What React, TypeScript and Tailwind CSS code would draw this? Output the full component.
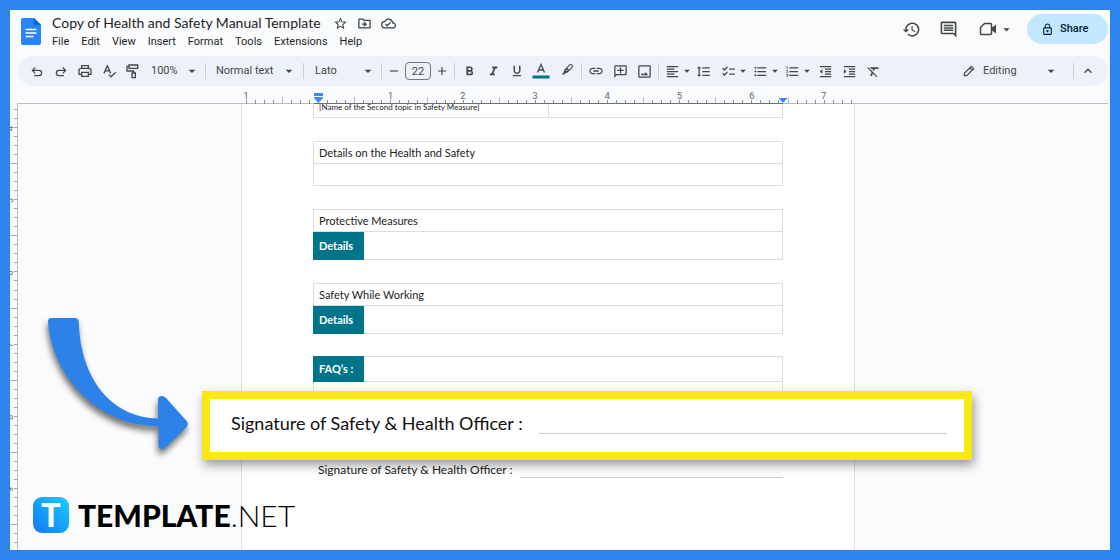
import type { ReactNode } from "react";
import {
  MdArrowDropDown,
  MdChecklist,
  MdFormatAlignLeft,
  MdFormatBold,
  MdFormatClear,
  MdFormatIndentDecrease,
  MdFormatIndentIncrease,
  MdFormatItalic,
  MdFormatLineSpacing,
  MdFormatListBulleted,
  MdFormatListNumbered,
  MdFormatUnderlined,
  MdHistory,
  MdKeyboardArrowUp,
  MdLink,
  MdLockOutline,
  MdOutlineAddComment,
  MdOutlineCloudDone,
  MdOutlineComment,
  MdOutlineDriveFileMove,
  MdStarBorder,
} from "react-icons/md";

const MENUS = ["File", "Edit", "View", "Insert", "Format", "Tools", "Extensions", "Help"];

function IconButton({ label, className = "w-6", children }: { label: string; className?: string; children: ReactNode }) {
  return (
    <button type="button" aria-label={label} className={`flex h-6 shrink-0 items-center justify-center ${className}`}>
      {children}
    </button>
  );
}

function SplitButton({ label, children }: { label: string; children: ReactNode }) {
  return (
    <div className="flex shrink-0 items-center">
      <IconButton label={label} className="w-[22px]">{children}</IconButton>
      <IconButton label={`${label} options`} className="w-2">
        <MdArrowDropDown size={14} className="shrink-0" />
      </IconButton>
    </div>
  );
}

function Picker({ label, value, className }: { label: string; value: string; className: string }) {
  return (
    <div className={`flex shrink-0 items-center ${className}`}>
      <select aria-label={label} className="h-6 w-full appearance-none bg-transparent">
        <option>{value}</option>
      </select>
      <MdArrowDropDown size={16} className="pointer-events-none -ml-4 shrink-0" />
    </div>
  );
}

function Separator({ className = "mx-1" }: { className?: string }) {
  return <span className={`h-4 w-px shrink-0 bg-[#c9ced6] ${className}`} />;
}

function Drawing({ children, size = 16 }: { children: ReactNode; size?: number }) {
  return (
    <svg width={size} height={size} viewBox="0 0 24 24" fill="none" stroke="currentColor" strokeWidth="2" aria-hidden="true">
      {children}
    </svg>
  );
}

function Header() {
  return (
    <header className="flex h-[46px] shrink-0 items-start pl-[11px] pr-[2px]">
      <svg viewBox="0 0 20 27" className="mt-2 h-[27px] w-5 shrink-0" aria-label="Docs">
        <path d="M2 0H13L20 7V25Q20 27 18 27H2Q0 27 0 25V2Q0 0 2 0Z" fill="#2684fc" />
        <path d="M13 0L20 7H13Z" fill="#0066da" />
        <path d="M4.500 11.500H15.500M4.500 15H15.500M4.500 18.500H12.500" stroke="#fff" strokeWidth="1.400" />
      </svg>
      <div className="ml-[11px] flex flex-col">
        <div className="flex h-[26px] items-center text-[#3c4043]">
          <h1 className="text-[14px] leading-5 text-[#1f1f1f]">Copy of Health and Safety Manual Template</h1>
          <div className="ml-2 flex">
            <IconButton label="Star"><MdStarBorder size={15} /></IconButton>
            <IconButton label="Move"><MdOutlineDriveFileMove size={15} /></IconButton>
            <IconButton label="Saved to Drive"><MdOutlineCloudDone size={15} /></IconButton>
          </div>
        </div>
        <nav className="flex gap-3 font-[Roboto,sans-serif] text-[11px] leading-3 text-[#1f1f1f]">
          {MENUS.map((m) => (
            <button type="button" key={m}>{m}</button>
          ))}
        </nav>
      </div>
      <div className="ml-auto flex h-[38px] items-center text-[#444746]">
        <IconButton label="Version history"><MdHistory size={19} /></IconButton>
        <IconButton label="Comments" className="ml-[13px] w-6"><MdOutlineComment size={19} /></IconButton>
        <IconButton label="Join a call" className="ml-4 w-6">
          <svg width="18" height="18" viewBox="0 0 18 18" aria-hidden="true">
            <path d="M5.500 3.500H11.500Q12.500 3.500 12.500 4.500V13.500Q12.500 14.500 11.500 14.500H2.500Q1.500 14.500 1.500 13.500V7.500Z" fill="none" stroke="currentColor" strokeWidth="1.500" strokeLinejoin="round" />
            <path d="M12.500 8L17 4.500V13.500L12.500 10Z" fill="currentColor" />
          </svg>
        </IconButton>
        <IconButton label="Call options" className="w-3"><MdArrowDropDown size={15} className="shrink-0" /></IconButton>
        <button type="button" className="ml-[15px] flex h-[30px] w-[81px] items-center gap-[6px] rounded-full bg-[#c2e7ff] pl-[14px] font-[Roboto,sans-serif] text-[11px] font-medium text-[#001d35]">
          <MdLockOutline size={13} />
          Share
        </button>
      </div>
    </header>
  );
}

function Toolbar() {
  return (
    <div role="toolbar" className="ml-2 mr-[2px] flex h-[30px] shrink-0 items-center rounded-full bg-[#edf2fa] pl-[7px] font-[Roboto,sans-serif] text-[11px] text-[#444746]">
      <IconButton label="Undo">
        <Drawing size={14}><path d="M9 6L4 11L9 16M4 11H15Q20 11 20 15.500Q20 20 15 20H7" /></Drawing>
      </IconButton>
      <IconButton label="Redo">
        <Drawing size={14}><path d="M15 6L20 11L15 16M20 11H9Q4 11 4 15.500Q4 20 9 20H17" /></Drawing>
      </IconButton>
      <IconButton label="Print">
        <Drawing><path d="M7 8V4H17V8M7 17H3V11Q3 8 6 8H18Q21 8 21 11V17H17M7 14H17V20H7Z" /></Drawing>
      </IconButton>
      <IconButton label="Spelling and grammar check">
        <Drawing size={15}><path d="M3 15L8.500 3L14 15M5 11H12M11 17L14.500 20.500L22 13" /></Drawing>
      </IconButton>
      <IconButton label="Paint format">
        <Drawing><path d="M6 3H19V8H6ZM6 5H3V12H13V15M10.500 15H15.500V22H10.500Z" /></Drawing>
      </IconButton>
      <Picker label="Zoom" value="100%" className="ml-[6px] w-[49px]" />
      <Separator className="ml-[5px] mr-[10px]" />
      <Picker label="Styles" value="Normal text" className="w-[81px]" />
      <Separator className="ml-[6px] mr-[11px]" />
      <Picker label="Font" value="Lato" className="w-[61px]" />
      <Separator className="ml-[5px] mr-1" />
      <IconButton label="Decrease font size" className="w-4"><Drawing size={14}><path d="M5 12H19" /></Drawing></IconButton>
      <input aria-label="Font size" defaultValue="22" className="mx-[3px] h-[18px] w-[26px] shrink-0 rounded-[4px] border border-[#747775] bg-transparent text-center" />
      <IconButton label="Increase font size" className="w-4"><Drawing size={14}><path d="M5 12H19M12 5V19" /></Drawing></IconButton>
      <Separator className="ml-1 mr-[2px]" />
      <IconButton label="Bold"><MdFormatBold size={15} /></IconButton>
      <IconButton label="Italic"><MdFormatItalic size={15} /></IconButton>
      <IconButton label="Underline"><MdFormatUnderlined size={14} /></IconButton>
      <IconButton label="Text colour">
        <svg width="18" height="16" viewBox="0 0 18 16" aria-hidden="true">
          <path d="M5.500 9.500L9 1.500L12.500 9.500M6.500 7H11.500" fill="none" stroke="currentColor" strokeWidth="1.300" />
          <path d="M0.500 12.500H17.500V15.500H0.500Z" fill="#00758a" />
        </svg>
      </IconButton>
      <IconButton label="Highlight colour" className="ml-[2px] w-6 pb-[3px]">
        <Drawing size={13}>
          <path d="M7 13L16 3.500Q18 2 19.500 3.500L20.500 4.500Q22 6 20.500 8L11 17Z" />
          <path d="M7 12L12 17L8 19L6 21H1L5 17Z" fill="currentColor" stroke="none" />
          <path d="M10 10L14.500 14.500" strokeWidth="3" />
        </Drawing>
      </IconButton>
      <Separator className="mx-[2px]" />
      <IconButton label="Insert link"><MdLink size={16} /></IconButton>
      <IconButton label="Add comment"><MdOutlineAddComment size={15} className="-scale-x-100" /></IconButton>
      <IconButton label="Insert image">
        <Drawing size={15}>
          <rect x="3" y="3" width="18" height="18" rx="1" />
          <path d="M6 18L9 14.500L11 16.500L14 13L18 18Z" fill="currentColor" stroke="none" />
        </Drawing>
      </IconButton>
      <Separator className="mx-[2px]" />
      <SplitButton label="Align"><MdFormatAlignLeft size={15} /></SplitButton>
      <IconButton label="Line spacing"><MdFormatLineSpacing size={15} /></IconButton>
      <div className="flex shrink-0 items-center gap-[2px] pl-[2px]">
        <SplitButton label="Checklist"><MdChecklist size={15} /></SplitButton>
        <SplitButton label="Bulleted list"><MdFormatListBulleted size={15} /></SplitButton>
        <SplitButton label="Numbered list"><MdFormatListNumbered size={15} /></SplitButton>
        <IconButton label="Decrease indent"><MdFormatIndentDecrease size={15} /></IconButton>
      </div>
      <IconButton label="Increase indent"><MdFormatIndentIncrease size={15} /></IconButton>
      <IconButton label="Clear formatting"><MdFormatClear size={15} /></IconButton>
      <div className="ml-auto flex shrink-0 items-center pr-2">
        <Drawing size={14}><path d="M4 20V16L16 4L20 8L8 20ZM13.500 6.500L17.500 10.500" /></Drawing>
        <Picker label="Mode" value="Editing" className="ml-[7px] w-[76px]" />
        <Separator className="ml-[14px] mr-[2px]" />
        <IconButton label="Hide menus"><MdKeyboardArrowUp size={16} /></IconButton>
      </div>
    </div>
  );
}

const INCH = 72.2;
const TICKS = Array.from({ length: 68 }, (_, i) => i);

function HorizontalRuler() {
  return (
    <div className="ml-[7px] mr-[2px] h-[18px] shrink-0 border-b border-[#b9bcc0] pr-[27px]">
      <div className="mx-auto grid h-[18px] w-[614px]">
        <div className="col-start-1 row-start-1 -ml-8 grid w-[650px] grid-cols-9 pt-1 text-center font-[Roboto,sans-serif] text-[9px] leading-3 text-[#5f6368]">
          {["1", "", "1", "2", "3", "4", "5", "6", "7"].map((n, i) => (
            <span key={i}>{n}</span>
          ))}
        </div>
        <svg viewBox="0 0 614 18" className="col-start-1 row-start-1 h-[18px] w-[614px]" aria-hidden="true">
          {TICKS.map((i) => (
            <path key={i} d={`M${Math.round(4 + (i * INCH) / 8) + 0.5} ${i % 8 === 4 ? 11 : 14}V18`} stroke={i % 8 === 4 ? "#b5b8bc" : "#8d9094"} />
          ))}
          <path d="M72 17.500H541" stroke="#6d7074" />
          <path d="M72 7H81V10H72ZM72 11H81V12L76.500 17L72 12Z" fill="#4285f4" />
          <path d="M536.500 12H545.500L541 17Z" fill="#4285f4" />
        </svg>
      </div>
    </div>
  );
}

function VerticalRuler() {
  return (
    <svg className="h-full w-2 shrink-0" aria-hidden="true">
      {Array.from({ length: 60 }, (_, i) => (
        <path key={i} d={`M${i % 8 === 6 ? 1 : 4} ${Math.round(5 + i * 9.025) + 0.5}H7`} stroke="#a0a3a7" />
      ))}
      {[4, 5, 6, 7, 8, 9].map((n, i) => (
        <text key={n} transform={`translate(3 ${27 + i * INCH}) rotate(-90)`} fontSize="9" fontFamily="Roboto, sans-serif" fill="#5f6368">
          {n}
        </text>
      ))}
      <path d="M7.500 0V2000" stroke="#b5b8bc" />
    </svg>
  );
}

const TABLE = "w-full table-fixed border-collapse border border-[#dcdcdc]";
const CELL = "border border-[#dcdcdc] px-[5px] py-0 text-left font-normal";
const TAG = "border border-[#00758a] bg-[#00758a] px-[5px] py-0 text-left font-bold text-white";

function DetailsTable({ title }: { title: string }) {
  return (
    <table className={TABLE}>
      <colgroup>
        <col className="w-[50px]" />
        <col />
      </colgroup>
      <tbody>
        <tr className="h-[22px]"><th colSpan={2} className={CELL}>{title}</th></tr>
        <tr className="h-[28px]"><th className={TAG}>Details</th><td className={CELL} /></tr>
      </tbody>
    </table>
  );
}

function SignatureCallout() {
  return (
    <div className="absolute -left-10 top-[287px] flex h-[69px] w-[770px] items-start border-8 border-[#fae910] bg-white pl-[21px] pr-[17px] pt-3 shadow-[2px_5px_10px_rgba(0,0,0,0.4)]">
      <span className="shrink-0 text-[18px] leading-6 text-[#111]">Signature of Safety &amp; Health Officer :</span>
      <span className="ml-4 mt-[22px] h-px flex-1 bg-[#cfcfcf]" />
    </div>
  );
}

function Page() {
  return (
    <div className="relative mx-auto w-[614px] border-x border-[#dfe1e4] bg-white px-[71px] text-[11px] leading-4 text-[#222]">
      <table className={`-mt-2 ${TABLE}`}>
        <tbody>
          <tr className="h-[21px]">
            <td className={`${CELL} text-[8px]`}>[Name of the Second topic in Safety Measure]</td>
            <td className={CELL} />
          </tr>
        </tbody>
      </table>
      <div className="mt-[23px] flex flex-col gap-[23px]">
        <table className={TABLE}>
          <tbody>
            <tr className="h-[22px]"><th className={CELL}>Details on the Health and Safety</th></tr>
            <tr className="h-[22px]"><td className={CELL} /></tr>
          </tbody>
        </table>
        <DetailsTable title="Protective Measures" />
        <DetailsTable title="Safety While Working" />
      </div>
      <table className={`mt-[22px] ${TABLE}`}>
        <colgroup>
          <col className="w-[50px]" />
          <col />
        </colgroup>
        <tbody>
          <tr className="h-[25px]"><th className={TAG}>FAQ’s :</th><td className={CELL} /></tr>
          <tr className="h-[25px]"><td colSpan={2} className={CELL} /></tr>
        </tbody>
      </table>
      <div className="mt-[55px] flex items-end pl-[5px]">
        <span className="text-[12px] leading-4">Signature of Safety &amp; Health Officer :</span>
        <span className="ml-2 h-px flex-1 bg-[#cfcfcf]" />
      </div>
      <SignatureCallout />
    </div>
  );
}

function CurvedArrow() {
  return (
    <svg viewBox="40 310 160 150" className="absolute bottom-[90px] left-[30px] h-[150px] w-[160px] drop-shadow-[-1px_5px_3px_rgba(0,0,0,0.55)]" aria-hidden="true">
      <path
        d="M51 318H75Q78.500 318 78.800 322C80 372 106 417 158 418.500V399Q158.500 396 162 396Q164 396 166 398L187 421.500Q188.500 424 187 426.500L166 447Q164 449 161 449Q158.500 448.500 158.500 445V426C104 427 53 382 48 322Q48 318 51 318Z"
        fill="#2c82e8"
      />
    </svg>
  );
}

function Brand() {
  return (
    <div className="absolute bottom-[17px] left-[23px] flex items-center text-black">
      <span className="flex size-[36px] items-center justify-center rounded-[9px] bg-linear-to-tr from-[#1877f2] to-[#22ccfc] text-[32px] leading-9 font-black text-white">T</span>
      <span className="ml-[9px] text-[30px] leading-8"><span className="font-black">TEMPLATE</span><span className="font-light">.NET</span></span>
    </div>
  );
}

export default function App() {
  return (
    <div className="relative flex h-screen flex-col overflow-hidden border-[10px] border-[#2c84ec] bg-[#f9fbfd] font-[Lato,sans-serif]">
      <Header />
      <Toolbar />
      <HorizontalRuler />
      <main className="flex min-h-0 flex-1">
        <VerticalRuler />
        <div className="flex min-w-0 flex-1 overflow-hidden pr-8">
          <Page />
        </div>
      </main>
      <CurvedArrow />
      <Brand />
    </div>
  );
}
